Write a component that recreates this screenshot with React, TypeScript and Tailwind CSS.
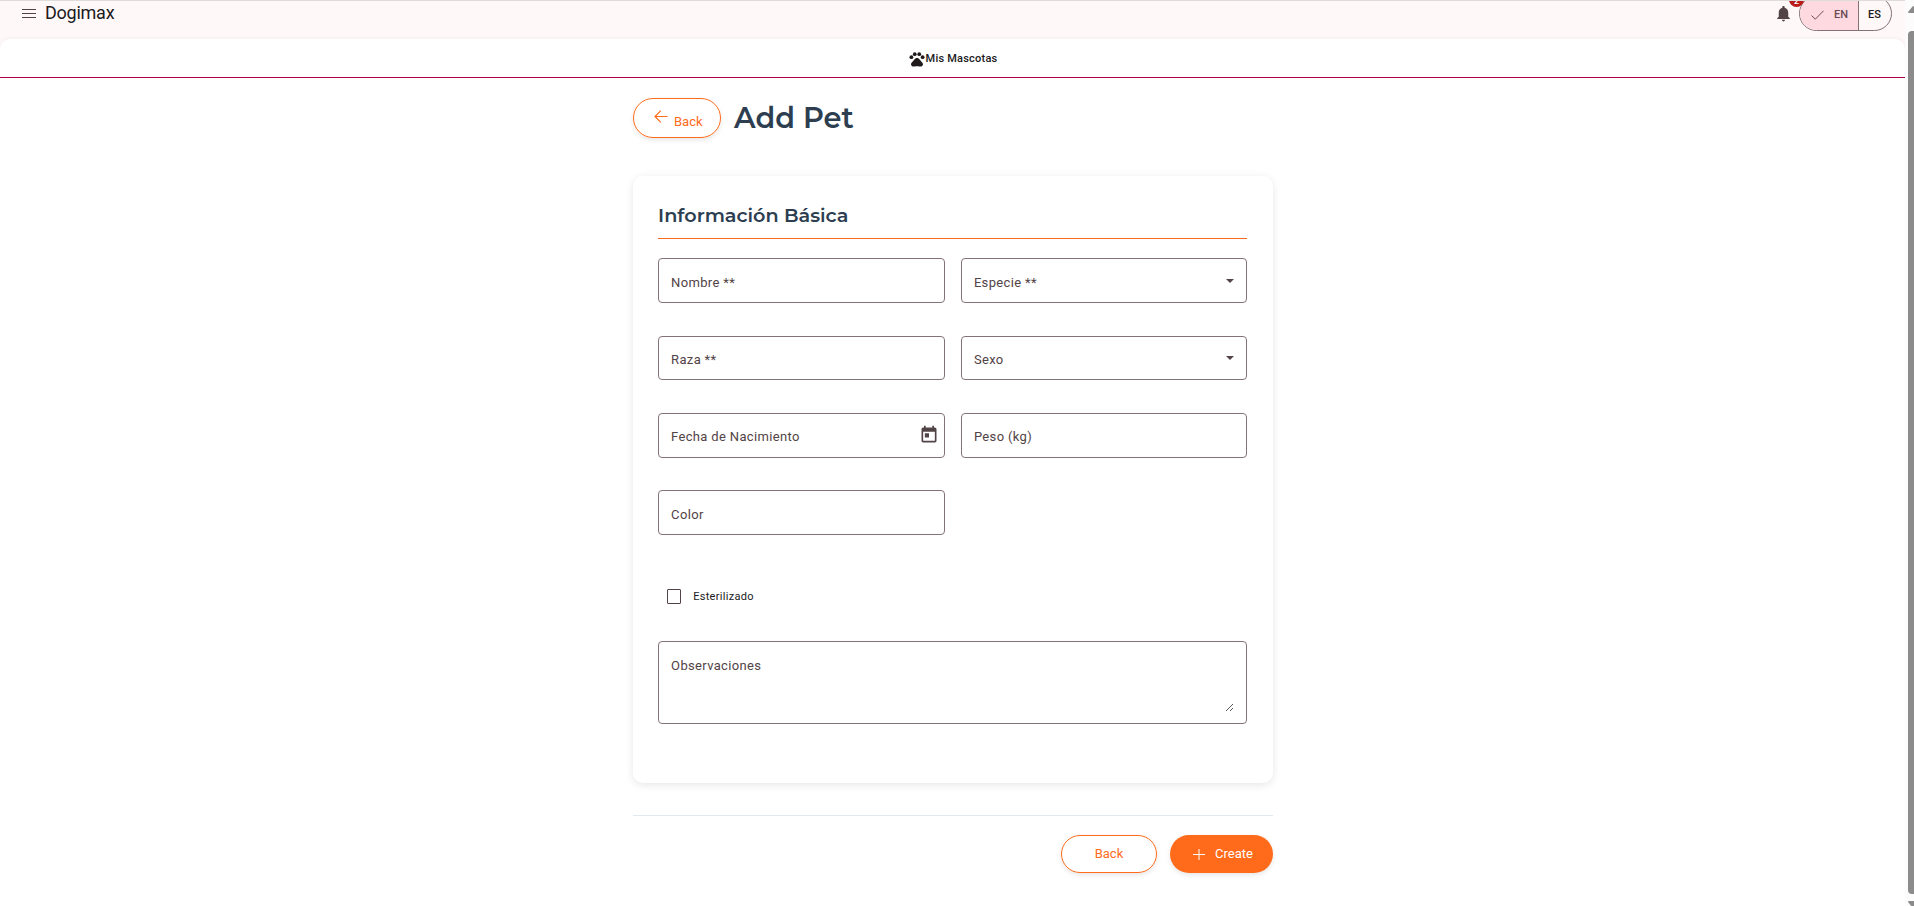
import type { ReactNode } from 'react';

const label = 'font-[Roboto,sans-serif] text-[13px] leading-[16px] tracking-[0.34px] text-[#524346]';

function Field({ text, children, size = 'pt-[3px] h-[45px]' }: { text: string; children?: ReactNode; size?: string }) {
  return (
    <div className={`flex items-center justify-between rounded-[4px] border border-[#847376] pl-3 ${size}`}>
      <span className={label}>{text}</span>
      {children}
    </div>
  );
}

function Caret() {
  return (
    <svg className="mr-3 -mt-[4px] h-1 w-2" viewBox="0 0 8 4" fill="#524346">
      <path d="M0 0h8L4 4z" />
    </svg>
  );
}

function CalendarIcon() {
  return (
    <svg className="mr-[5px] -mt-1 size-5" viewBox="0 0 24 24" fill="#524346">
      <path d="M19 3h-1V1h-2v2H8V1H6v2H5c-1.11 0-1.99.9-1.99 2L3 19c0 1.1.89 2 2 2h14c1.1 0 2-.9 2-2V5c0-1.1-.9-2-2-2zm0 16H5V8h14v11zM7 10h5v5H7z" />
    </svg>
  );
}

export default function App() {
  return (
    <div className="flex h-[906px] w-[1914px] overflow-hidden bg-white font-[Roboto,sans-serif] text-[#201a1b]">
      <div className="flex min-w-0 flex-1 flex-col bg-[#fff8f8]">
        <header className="flex h-[39px] shrink-0 items-start justify-between overflow-hidden border-t border-[#dfdcdc] pl-[22px] pr-[13px]">
          <div className="flex items-start">
            <svg className="mt-2 h-[9px] w-[14px]" viewBox="0 0 14 9" fill="#524346">
              <path d="M0 0h14v1H0zM0 4h14v1H0zM0 8h14v1H0z" />
            </svg>
            <span className="ml-[9px] text-[18px] leading-6 tracking-[-0.25px]">Dogimax</span>
          </div>
          <div className="flex items-start">
            <div className="relative mr-[6px] mt-[3px]">
              <svg className="size-[19px]" viewBox="0 0 24 24" fill="#524346">
                <path d="M12 22c1.1 0 2-.9 2-2h-4c0 1.1.89 2 2 2zm6-6v-5c0-3.07-1.64-5.64-4.5-6.32V4c0-.83-.67-1.5-1.5-1.5s-1.5.67-1.5 1.5v.68C7.63 5.36 6 7.92 6 11v5l-2 2v1h16v-1l-2-2z" />
              </svg>
              <span className="absolute -top-[12px] left-[15px] flex size-[15px] items-center justify-center rounded-full bg-[#ba1a1a] pt-[3px] text-[9px] font-medium leading-none text-white">2</span>
            </div>
            <div className="-mt-[5px] flex h-[35px] w-[93px] overflow-hidden rounded-full border border-[#847376] text-[11px] font-medium leading-[34px]">
              <div className="flex w-[59px] items-center border-r border-[#847376] bg-[#ffd9e0] pl-[11px] text-[#6b4c54]">
                <svg className="mt-[2px] h-[10px] w-[13px]" viewBox="0 0 13 10" fill="none" stroke="#6b4c54">
                  <path d="M0.5 5.5L4.3 9.2L12.5 0.8" />
                </svg>
                <span className="ml-[10px] pt-[2px]">EN</span>
              </div>
              <span className="flex-1 pl-[9px] pt-[1px]">ES</span>
            </div>
          </div>
        </header>

        <main className="flex flex-1 flex-col items-center rounded-t-[10px] bg-white shadow-[0_0_5px_rgba(0,0,0,0.06)]">
          <nav className="flex h-[39px] w-full items-center justify-center border-b border-[#b0004b] pt-[1px]">
            <svg className="size-[18px]" viewBox="0 0 24 24" fill="#201a1b">
              <circle cx="4.5" cy="9.5" r="2.5" />
              <circle cx="9" cy="5.5" r="2.5" />
              <circle cx="15" cy="5.5" r="2.5" />
              <circle cx="19.500" cy="9.5" r="2.5" />
              <path d="M17.34 14.86c-.87-1.02-1.600-1.890-2.480-2.910-.46-.54-1.050-1.080-1.750-1.320-.11-.04-.22-.07-.33-.09-.25-.04-.52-.04-.78-.04s-.53 0-.79.05c-.11.02-.22.05-.33.09-.7.24-1.280.78-1.750 1.320-.87 1.020-1.600 1.890-2.480 2.910-1.310 1.310-2.920 2.760-2.620 4.790.29 1.020 1.020 2.030 2.330 2.320.73.15 3.060-.44 5.540-.44h.18c2.480 0 4.810.58 5.540.44 1.310-.29 2.040-1.310 2.330-2.320.31-2.040-1.300-3.490-2.610-4.800z" />
            </svg>
            <span className="pt-[1px] text-[11px] font-medium tracking-[0.22px]">Mis Mascotas</span>
          </nav>

          <section className="flex w-[640px] flex-col pt-5">
            <div className="flex h-10 items-center">
              <button className="flex h-10 w-[88px] rounded-full border border-[#ff6b1a] pl-[20px] text-[13px] text-[#ff6b1a] shadow-[0_2px_5px_rgba(0,0,0,0.1)]">
                <svg className="mt-[11px] h-[13px] w-[14px]" viewBox="0 0 14 13" fill="none" stroke="#ff6b1a" strokeWidth="1.2">
                  <path d="M13.500 6.500H1M6.800 0.700L1 6.500L6.800 12.300" />
                </svg>
                <span className="ml-[6.500px] mt-[14px] leading-[17px]">Back</span>
              </button>
              <h1 className="ml-[13.500px] font-[Montserrat,Inter,sans-serif] text-[28.8px] font-semibold leading-10 text-[#2c3e50]">Add Pet</h1>
            </div>

            <div className="mt-[38px] flex h-[607px] flex-col rounded-[10px] px-[25.600px] shadow-[0_2px_8px_rgba(0,0,0,0.1)]">
              <h2 className="mt-[25px] flex h-[38px] shrink-0 border-b border-[#ff6b1a] pt-[1px] font-[Montserrat,Inter,sans-serif] text-[19.2px] font-semibold leading-[26px] text-[#2c3e50]">Información Básica</h2>
              <div className="mt-[19px] grid grid-cols-[286.8px_286px] grid-rows-[45px_44px_44px_45px] gap-x-4 gap-y-[33px]">
                <Field text="Nombre **" size="pt-[5px] h-[45px]" />
                <Field text="Especie **" size="pt-[5px] h-[45px]"><Caret /></Field>
                <Field text="Raza **" size="pt-[3px] h-[44px]" />
                <Field text="Sexo" size="pt-[3px] h-[44px]"><Caret /></Field>
                <Field text="Fecha de Nacimiento"><CalendarIcon /></Field>
                <Field text="Peso (kg)" />
                <Field text="Color" size="pt-[5px] h-[45px]" />
              </div>
              <label className="mt-[54px] flex h-4 items-center pl-[8.600px] text-[11px] tracking-[0.3px]">
                <span className="-mt-[1px] mr-[12.500px] h-[15px] w-[14px] rounded-[1px] border border-[#524346]" />
                Esterilizado
              </label>
              <div className="mt-[36px] flex h-[83px] justify-between rounded-[4px] border border-[#847376] px-3">
                <span className={`${label} mt-4`}>Observaciones</span>
                <svg className="mb-3 mr-[1px] size-[7px] self-end" viewBox="0 0 7 7" stroke="#444" strokeWidth="0.9">
                  <path d="M0 7L7 0M4 7L7 4" />
                </svg>
              </div>
            </div>

            <div className="mt-8 flex justify-end gap-[13px] border-t border-[#e2e8f0] pt-[19px] text-[13px]">
              <button className="h-[38px] w-24 rounded-full border border-[#ff6b1a] pl-[1px] text-[#ff6b1a] shadow-[0_2px_5px_rgba(0,0,0,0.1)]">Back</button>
              <button className="flex h-[38px] w-[103px] items-center rounded-full bg-[#ff6b1a] pl-[23px] text-white shadow-[0_2px_5px_rgba(0,0,0,0.1)]">
                <svg className="h-[11px] w-[12px]" viewBox="0 0 12 11" fill="white">
                  <path d="M0 5h12v1H0zM5.500 0h1v11h-1z" />
                </svg>
                <span className="ml-[10.500px]">Create</span>
              </button>
            </div>
          </section>
        </main>
      </div>

      <div className="flex w-[9px] shrink-0 flex-col overflow-hidden bg-[#fcfcfc] pl-[3px]">
        <svg className="mt-[6px] h-[7px] w-[12px] shrink-0" viewBox="0 0 12 7" fill="#8b8b8b">
          <path d="M4.500 0.500Q6 -0.500 7.500 0.500L12 6Q12 7 11 7H1Q0 7 0 6Z" />
        </svg>
        <div className="mt-[18px] h-[863px] w-[12px] shrink-0 rounded-[4px] bg-[#8b8b8b]" />
        <svg className="mt-[7px] h-[7px] w-[12px] shrink-0" viewBox="0 0 12 7" fill="#8b8b8b">
          <path d="M0 1Q0 0 1 0H11Q12 0 12 1L7.500 6.500Q6 7 4.500 6.500Z" />
        </svg>
      </div>
    </div>
  );
}
